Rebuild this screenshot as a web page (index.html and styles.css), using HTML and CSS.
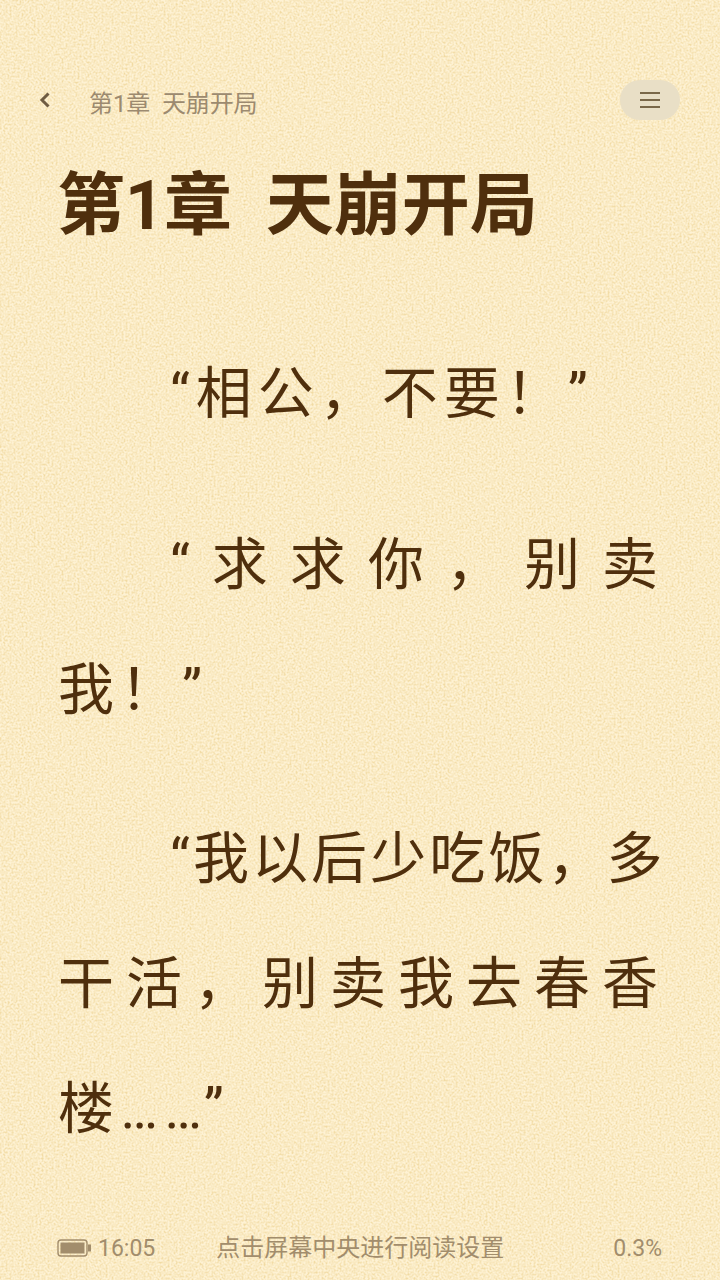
FILE: index.html
```html
<!DOCTYPE html>
<html lang="zh-CN">
<head>
<meta charset="utf-8">
<title>第1章 天崩开局</title>
<link rel="stylesheet" href="styles.css">
</head>
<body>
<svg class="paper" width="720" height="1280" aria-hidden="true">
  <filter id="grain" x="0" y="0" width="100%" height="100%">
    <feTurbulence type="fractalNoise" baseFrequency="0.5" numOctaves="4" seed="7"/>
    <feColorMatrix type="matrix" values="0 0 0 0 0.88  0 0 0 0 0.70  0 0 0 0 0.36  1.5 1.5 0 0 -1.2"/>
  </filter>
  <rect width="720" height="1280" filter="url(#grain)"/>
</svg>
<div class="page">
  <header class="topbar">
    <svg class="back" width="14" height="18" viewBox="0 0 14 18"><path d="M10.5 2.5 4 9l6.5 6.5" fill="none" stroke="#6f5c42" stroke-width="3"/></svg>
    <span class="crumb">第1章&nbsp;&nbsp;天崩开局</span>
    <button class="menu" aria-label="目录"><span></span><span></span><span></span></button>
  </header>
  <h1 class="title">第1章&nbsp;&nbsp;天崩开局</h1>
  <main class="content">
    <div class="para">
      <div class="line first l1">“相公，不要！”</div>
    </div>
    <div class="para">
      <div class="line first wide">“求求你，别卖</div>
      <div class="line l3">我！”</div>
    </div>
    <div class="para">
      <div class="line first l4">“我以后少吃饭，多</div>
      <div class="line wide">干活，别卖我去春香</div>
      <div class="line l6">楼……”</div>
    </div>
  </main>
  <footer class="status">
    <div class="left">
      <svg width="34" height="18" viewBox="0 0 34 18"><rect x="1" y="1" width="29" height="16" rx="3" fill="none" stroke="#a28d6c" stroke-width="1.4"/><rect x="3.5" y="3.5" width="24" height="11" fill="#a28d6c"/><rect x="31" y="5.5" width="3" height="7" fill="#a28d6c"/></svg>
      <span class="num">16:05</span>
    </div>
    <span class="hint">点击屏幕中央进行阅读设置</span>
    <span class="num">0.3%</span>
  </footer>
</div>
</body>
</html>
```
FILE: styles.css
```css
html, body { margin: 0; padding: 0; }
body {
  width: 720px;
  height: 1280px;
  overflow: hidden;
  position: relative;
  background: #fef2d4;
  font-family: Roboto, "Noto Sans CJK SC", sans-serif;
  color: #4f2f0d;
}
.paper { position: absolute; left: 0; top: 0; }
.page { position: relative; height: 1280px; display: flex; flex-direction: column; }
.topbar { display: flex; align-items: center; height: 40px; margin-top: 80px; padding: 0 40px 0 38px; }
.back { flex: none; margin-top: -1px; }
.crumb { margin-left: 37px; font-size: 24px; letter-spacing: -0.1px; color: #9c8a6f; line-height: 48px; margin-top: 8px; }
.menu { margin-left: auto; width: 60px; height: 40px; border: 0; border-radius: 20px; background: #e9dfc6; display: flex; flex-direction: column; align-items: center; justify-content: center; gap: 5px; padding: 0; }
.menu span { display: block; width: 20px; height: 2px; background: #7a6848; }
.title { margin: 41px 0 0 57px; font-size: 68px; line-height: 90px; font-weight: 700; color: #4f2f0d; white-space: nowrap; }
.content { padding: 0 62px 0 58px; margin-top: 81px; }
.para { margin-bottom: 46px; }
.para + .para { margin-bottom: 44px; }
.line { height: 125px; line-height: 125px; font-size: 56px; white-space: nowrap; }
.first { padding-left: 112px; }
.wide { text-align: justify; text-align-last: justify; white-space: normal; }
.l1 { letter-spacing: 6px; }
.l3 { letter-spacing: 6px; }
.l4 { letter-spacing: 3.1px; }
.l6 { letter-spacing: 6.5px; }
.status { position: absolute; left: 57px; right: 58px; top: 1228px; height: 40px; display: flex; align-items: center; font-size: 24px; color: #a28d6c; }
.left { display: flex; align-items: center; gap: 7px; }
.num { font-size: 23px; }
.hint { margin-left: 61px; margin-right: auto; position: relative; top: -3px; }
```
